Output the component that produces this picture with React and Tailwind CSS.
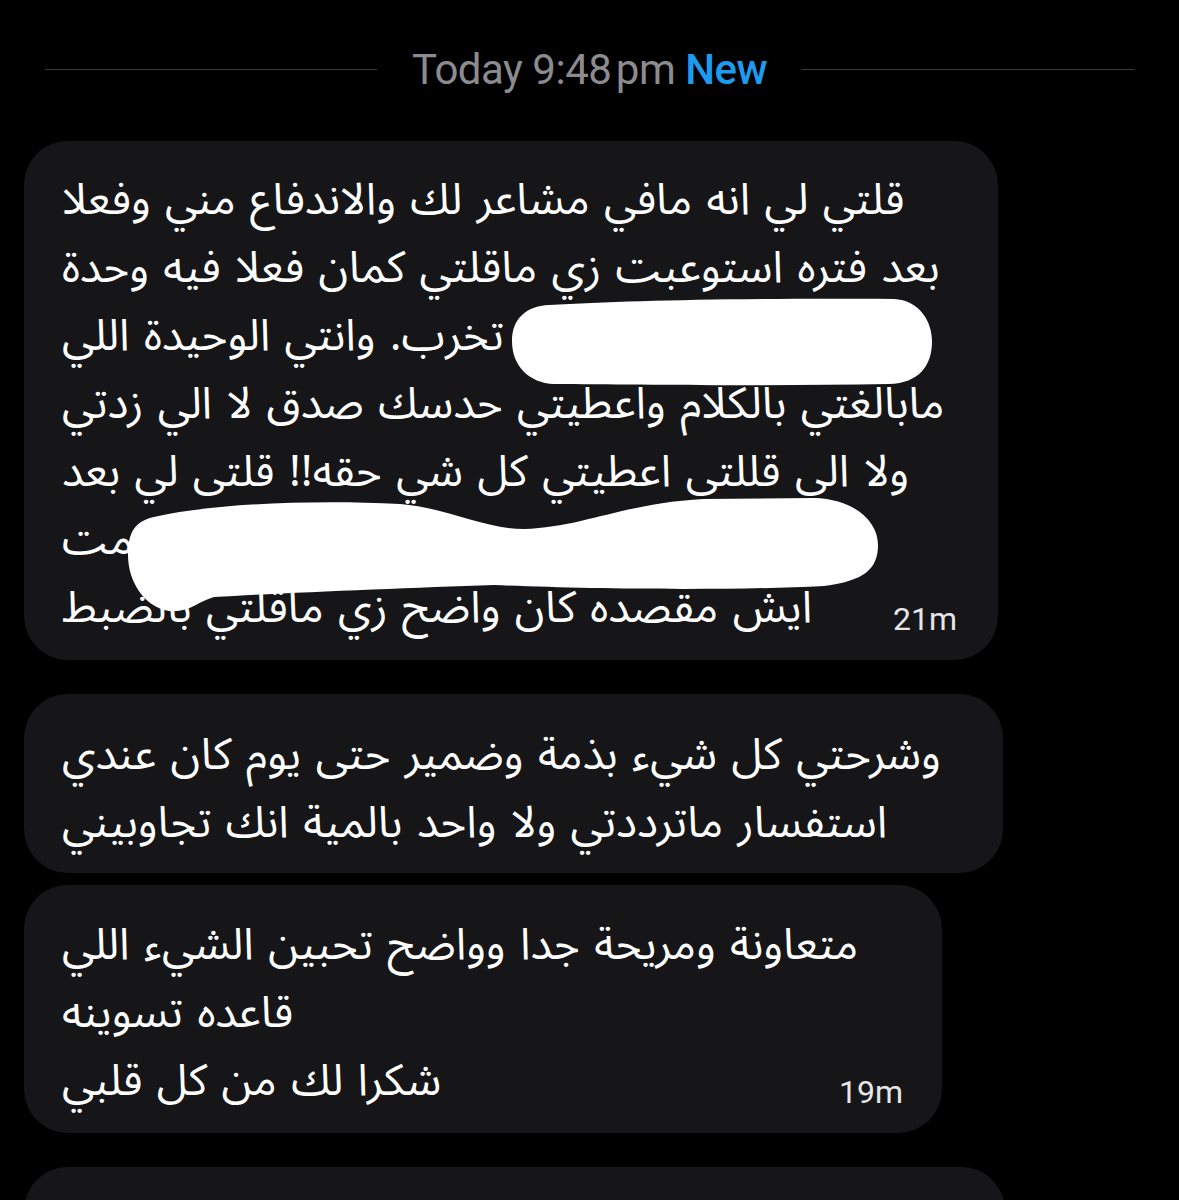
import React from "react";

const arabic = { fontFamily: '"Noto Sans Arabic", "Noto Sans Arabic UI", "DejaVu Sans", sans-serif' };
const latin = { fontFamily: 'Roboto, "Liberation Sans", Arial, sans-serif' };

function Line({ children }) {
  return (
    <div dir="rtl" className="text-left h-[68px] leading-[68px] whitespace-nowrap text-[44px] [word-spacing:3px] text-white" style={arabic}>
      {children}
    </div>
  );
}

function LastLine({ text, time }) {
  return (
    <div className="flex items-baseline justify-between h-[68px]">
      <div dir="rtl" className="text-left leading-[68px] whitespace-nowrap text-[44px] [word-spacing:3px] text-white" style={arabic}>
        {text}
      </div>
      <div className="text-[32px] text-[#e6e6e6] leading-[68px] translate-y-[8px]" style={latin}>
        {time}
      </div>
    </div>
  );
}

export default function App() {
  return (
    <div className="w-[1179px] h-[1200px] bg-black overflow-hidden">
      <div className="h-[138px] flex items-center px-[45px]">
        <div className="flex-1 h-px bg-[#3a3a3c]" />
        <div className="mx-[35px] text-[42px] tracking-[-0.5px] text-[#8b8b90] whitespace-nowrap" style={latin}>
          Today 9:48<span className="text-[20px]"> </span>pm <span className="text-[#1d9bf0] font-medium">New</span>
        </div>
        <div className="flex-1 h-px bg-[#3a3a3c]" />
      </div>

      <div className="pl-[24px] pt-[3px] flex flex-col">
        <div className="relative w-[974px] rounded-[44px] bg-[#161618] pl-[38px] pr-[41px] pt-[25px] pb-[18px]">
          <Line>قلتي لي انه مافي مشاعر لك والاندفاع مني وفعلا</Line>
          <Line>بعد فتره استوعبت زي ماقلتي كمان فعلا فيه وحدة</Line>
          <Line>تخرب. وانتي الوحيدة اللي</Line>
          <Line>مابالغتي بالكلام واعطيتي حدسك صدق لا الي زدتي</Line>
          <Line>ولا الى قللتى اعطيتي كل شي حقه!! قلتى لي بعد</Line>
          <Line>مت</Line>
          <LastLine text="ايش مقصده كان واضح زي ماقلتي بالضبط" time="21m" />
          <svg className="absolute inset-0 pointer-events-none" width="974" height="519" viewBox="0 0 974 519">
            <path
              fill="#ffffff"
              d="M 525 164 C 600 160, 700 157, 870 158 C 895 159, 908 180, 908 200 C 908 225, 895 242, 865 243 C 750 245, 620 244, 530 243 C 505 242, 488 225, 488 200 C 488 178, 502 165, 525 164 Z"
            />
            <path
              fill="#ffffff"
              d="M 104 414 C 104 390, 112 380, 130 376 C 180 364, 280 358, 376 363 C 420 366, 460 388, 500 388 C 560 386, 600 362, 680 358 L 790 357 C 830 358, 854 380, 854 404 C 854 428, 840 440, 800 445 C 700 450, 560 448, 470 444 C 380 447, 260 452, 190 456 C 175 460, 165 472, 145 470 C 120 466, 104 440, 104 414 Z"
            />
          </svg>
        </div>

        <div className="mt-[34px] w-[979px] rounded-[44px] bg-[#161618] pl-[38px] pr-[41px] pt-[27px] pb-[16px]">
          <Line>وشرحتي كل شيء بذمة وضمير حتى يوم كان عندي</Line>
          <Line>استفسار ماترددتي ولا واحد بالمية انك تجاوبيني</Line>
        </div>

        <div className="mt-[12px] w-[918px] rounded-[44px] bg-[#161618] pl-[38px] pr-[39px] pt-[26px] pb-[18px]">
          <Line>متعاونة ومريحة جدا وواضح تحبين الشيء اللي</Line>
          <Line>قاعده تسوينه</Line>
          <LastLine text="شكرا لك من كل قلبي" time="19m" />
        </div>

        <div className="mt-[34px] w-[981px] h-[120px] rounded-[44px] bg-[#161618]" />
      </div>
    </div>
  );
}
